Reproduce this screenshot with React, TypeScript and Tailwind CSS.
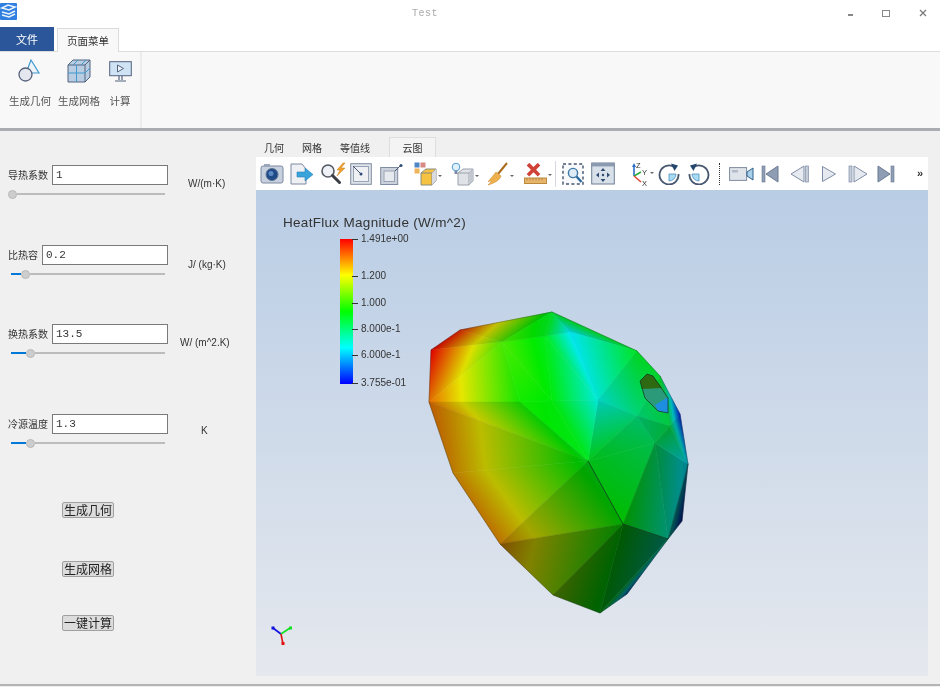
import React from "react";

type Pt = [number, number, number];
const V: Record<string, Pt> = {
  A: [552, 311, 0.46], B: [460, 329, 0.96], C: [431, 349, 1], D: [429, 401, 0.88],
  E: [453, 472, 0.84], F: [500, 543, 0.85], G: [553, 594, 0.66], H: [600, 612, 0.48],
  I: [627, 593, 0.12], J: [668, 538, 0.3], K: [682, 520, 0.03], L: [688, 463, 0.22],
  M: [680, 413, 0.03], N: [660, 375, 0.45], O: [637, 350, 0.46], P: [502, 341, 0.58],
  Q: [570, 331, 0.24], R: [520, 401, 0.52], S: [598, 399, 0.27], T: [588, 460, 0.47],
  U: [623, 523, 0.5], W: [637, 415, 0.36], X: [655, 442, 0.4], Y: [670, 425, 0.42],
  Z: [545, 335, 0.47], K2: [552, 400, 0.49],
};
const F: [string, string, string, number][] = [
  ["A", "B", "P", 0.82], ["B", "C", "P", 0.85], ["C", "D", "P", 0.95], ["D", "R", "P", 0.98],
  ["P", "R", "K2", 1], ["P", "K2", "Z", 1], ["Z", "K2", "S", 1], ["Z", "S", "Q", 1],
  ["P", "A", "Z", 0.92], ["Z", "A", "Q", 0.92], ["A", "O", "Q", 0.86],
  ["Q", "O", "S", 0.97], ["O", "W", "S", 0.9], ["S", "W", "T", 0.85], ["R", "T", "K2", 0.98], ["K2", "T", "S", 0.98],
  ["D", "T", "R", 0.86], ["D", "E", "T", 0.8], ["E", "F", "T", 0.8], ["F", "U", "T", 0.7],
  ["F", "G", "U", 0.55], ["G", "H", "U", 0.42], ["H", "J", "U", 0.38], ["H", "I", "J", 0.42],
  ["T", "U", "X", 0.8], ["W", "X", "T", 0.8], ["U", "J", "X", 0.62], ["J", "L", "X", 0.6],
  ["J", "K", "L", 0.35], ["O", "N", "W", 0.9], ["N", "Y", "W", 0.85], ["N", "M", "Y", 0.8],
  ["W", "Y", "X", 0.75], ["Y", "M", "L", 0.72], ["Y", "L", "X", 0.68],
];

const RAMP: [number, number, number, number][] = [
  [0, 0, 0, 1], [0.25, 0, 1, 1], [0.5, 0, 1, 0], [0.75, 1, 1, 0], [1, 1, 0, 0],
];

function Mesh() {
  const defs: React.ReactNode[] = [];
  const faces: React.ReactNode[] = [];
  F.forEach(([a, b, c, k], i) => {
    const [p, q, r] = [V[a], V[b], V[c]];
    const det = (q[0] - p[0]) * (r[1] - p[1]) - (r[0] - p[0]) * (q[1] - p[1]);
    const gx = ((q[2] - p[2]) * (r[1] - p[1]) - (r[2] - p[2]) * (q[1] - p[1])) / det;
    const gy = ((r[2] - p[2]) * (q[0] - p[0]) - (q[2] - p[2]) * (r[0] - p[0])) / det;
    const m = gx * gx + gy * gy || 1e-9;
    const x1 = p[0] - (p[2] * gx) / m;
    const y1 = p[1] - (p[2] * gy) / m;
    const id = `face${i}`;
    defs.push(
      <linearGradient key={id} id={id} gradientUnits="userSpaceOnUse" x1={x1} y1={y1} x2={x1 + gx / m} y2={y1 + gy / m}>
        {RAMP.map(([o, cr, cg, cb]) => (
          <stop key={o} offset={o} stopColor={`rgb(${Math.round(cr * 235 * k)},${Math.round(cg * 235 * k)},${Math.round(cb * 235 * k)})`} />
        ))}
      </linearGradient>
    );
    faces.push(
      <polygon key={id} points={`${p[0]},${p[1]} ${q[0]},${q[1]} ${r[0]},${r[1]}`} fill={`url(#${id})`} stroke={`url(#${id})`} strokeWidth={0.5} />
    );
  });
  return (
    <svg className="absolute left-0 top-0 blur-[0.7px]" width="672" height="486" viewBox="256 189 672 486">
      <defs>{defs}</defs>
      {faces}
      <polygon points="552,311 460,329 431,349 429,401 453,472 500,543 553,594 600,612 627,593 668,538 682,520 688,463 680,413 660,375 637,350" fill="none" stroke="#1a2a20" strokeOpacity="0.45" strokeWidth="0.7" />
      <polyline points="588,460 623,523 668,538" fill="none" stroke="#0d3318" strokeWidth="0.8" />
      <polygon points="640,380 647,373 653,375 668,397 668,412 658,410 645,397" fill="#2a9a78" />
      <polygon points="640,380 647,373 653,375 662,387 642,388" fill="#2e6a12" />
      <polygon points="655,404 668,396 668,412 658,410" fill="#1e8fe0" />
      <polyline points="640,380 647,373 653,375 668,397 668,412 658,410 645,397 640,380" fill="none" stroke="#12301c" strokeWidth="0.7" />
    </svg>
  );
}

const G = "#8e9db4";

function Camera() {
  return (
    <svg width="24" height="22" viewBox="0 0 24 22" className="ml-[4px]">
      <rect x="1" y="3" width="22" height="17" rx="2" fill="#c7d0de" stroke="#7d8aa0" />
      <rect x="4" y="1" width="6" height="3" fill="#9aa7ba" />
      <circle cx="12" cy="11.5" r="6" fill="#1f4a86" stroke="#5e7492" />
      <circle cx="11" cy="10.5" r="2.5" fill="#5c8ac4" />
    </svg>
  );
}
function Export() {
  return (
    <svg width="24" height="22" viewBox="0 0 24 22" className="ml-[6px]">
      <path d="M1 1h11l4 5v15H1z" fill="#eef0f4" stroke="#7d8aa0" />
      <path d="M7 9h8V5l8 6.5-8 6.5v-4H7z" fill="#39a4dc" stroke="#2a7fb5" strokeWidth="0.6" />
    </svg>
  );
}
function ZoomBolt() {
  return (
    <svg width="28" height="24" viewBox="0 0 28 24" className="ml-[6px]">
      <circle cx="8" cy="9" r="6" fill="#eef2f6" stroke="#555b64" strokeWidth="1.6" />
      <path d="M12.5 13.5l7 7" stroke="#3a3f46" strokeWidth="3" strokeLinecap="round" />
      <path d="M23 1l-6 7h3l-3 6 8-8h-4l4-5z" fill="#f0a22e" stroke="#c97a18" strokeWidth="0.5" />
    </svg>
  );
}
function BoxDot() {
  return (
    <svg width="22" height="22" viewBox="0 0 22 22" className="ml-[2px]">
      <rect x="0.7" y="0.7" width="20.6" height="20.6" fill="#dfe3ea" stroke="#7f8ba0" />
      <rect x="3.5" y="3.5" width="15" height="15" fill="#eef0f4" stroke="#98a3b5" />
      <path d="M3 3l8 8" stroke="#44546e" />
      <circle cx="11" cy="11" r="1.5" fill="#2d4a78" />
    </svg>
  );
}
function BoxOut() {
  return (
    <svg width="24" height="22" viewBox="0 0 24 22" className="ml-[8px]">
      <rect x="0.7" y="4.5" width="17" height="17" fill="#ccd2dc" stroke="#7f8ba0" />
      <rect x="4" y="8" width="10.5" height="10.5" fill="#e6e9ee" stroke="#98a3b5" />
      <path d="M15 8l6-6" stroke="#44546e" />
      <circle cx="21" cy="2.5" r="1.5" fill="#2d4a78" />
    </svg>
  );
}
function Arrow() {
  return <path d="M0 0h4l-2 2z" fill="#666" />;
}
function ColorCube() {
  return (
    <svg width="28" height="24" viewBox="0 0 28 24" className="ml-[10px]">
      <rect x="0.5" y="0.5" width="5" height="5" fill="#4f86c6" />
      <rect x="6.5" y="0.5" width="5" height="5" fill="#d78a84" />
      <rect x="0.5" y="6.5" width="5" height="5" fill="#f0b45a" />
      <path d="M7 11l5-4h10v12l-4 4H7z" fill="#f5c242" stroke="#8b8b80" />
      <path d="M7 11h11l4-4M18 11v12" fill="none" stroke="#8b8b80" />
      <path d="M18 11l4-4v12l-4 4z" fill="#d8dadf" />
      <g transform="translate(24 13)"><Arrow /></g>
    </svg>
  );
}
function BulbCube() {
  return (
    <svg width="28" height="24" viewBox="0 0 28 24" className="ml-[9px]">
      <circle cx="5" cy="5" r="3.8" fill="#e3f1fb" stroke="#4d9bd4" />
      <path d="M3.5 9h3v3h-3z" fill="#7d8aa0" />
      <path d="M7 11l5-4h10v12l-4 4H7z" fill="#dfe2e7" stroke="#9aa2ae" />
      <path d="M7 11h11l4-4M18 11v12" fill="none" stroke="#9aa2ae" />
      <path d="M18 11l4-4v12l-4 4z" fill="#c3c8d0" />
      <g transform="translate(24 13)"><Arrow /></g>
    </svg>
  );
}
function Broom() {
  return (
    <svg width="28" height="24" viewBox="0 0 28 24" className="ml-[8px]">
      <path d="M20 1L11 12" stroke="#a86c1c" strokeWidth="2" />
      <path d="M9 10l5 4c-1 4-6 7-13 9 2-2 3-3 3-4-1 0-2 0-3 1 2-3 5-6 8-10z" fill="#eeb04a" stroke="#c5862a" strokeWidth="0.5" />
      <g transform="translate(23 13)"><Arrow /></g>
    </svg>
  );
}
function RulerX() {
  return (
    <svg width="28" height="22" viewBox="0 0 28 22" className="ml-[9px]">
      <path d="M5 1l5 5 5-5 3 3-5 5 5 5-3 3-5-5-5 5-3-3 5-5-5-5z" fill="#cf4238" transform="translate(1 -1) scale(0.85)" />
      <rect x="0.5" y="15" width="22" height="5.5" fill="#e8b56a" stroke="#b98a3e" />
      <path d="M3 15v2.5M6 15v2.5M9 15v2.5M12 15v2.5M15 15v2.5M18 15v2.5" stroke="#a0783a" strokeWidth="0.7" />
      <g transform="translate(24 11)"><Arrow /></g>
    </svg>
  );
}
function ZoomBox() {
  return (
    <svg width="23" height="24" viewBox="0 0 23 24" className="ml-[6px]">
      <rect x="1" y="2" width="20" height="20" fill="#f8f9fb" stroke="#44546e" strokeWidth="1.4" strokeDasharray="3 2.4" />
      <circle cx="11" cy="11" r="4.6" fill="#dcebf6" stroke="#3d78a8" strokeWidth="1.4" />
      <path d="M14.5 14.5l5 5.5" stroke="#2a6aa0" strokeWidth="2.4" />
    </svg>
  );
}
function MoveBox() {
  return (
    <svg width="24" height="24" viewBox="0 0 24 24" className="ml-[6px]">
      <rect x="0.7" y="1" width="22.6" height="21" fill="#d8e0ea" stroke="#6f7d94" />
      <rect x="0.7" y="1" width="22.6" height="3.4" fill="#8b9ab0" />
      <path d="M12 6l2.4 3h-4.8zM12 20l2.4-3h-4.8zM5 13l3-2.4v4.8zM19 13l-3-2.4v4.8z" fill="#2f4a70" />
      <circle cx="12" cy="13" r="1.2" fill="#2f4a70" />
    </svg>
  );
}
function Axes() {
  return (
    <svg width="28" height="26" viewBox="0 0 28 26" className="ml-[12px]">
      <path d="M7 15V4" stroke="#2a6fc6" strokeWidth="1.6" />
      <path d="M5 6l2-4 2 4z" fill="#2a6fc6" />
      <path d="M7 15l7-4" stroke="#2eae3a" strokeWidth="1.6" />
      <path d="M7 15l7 6" stroke="#e2483a" strokeWidth="1.6" />
      <text x="9" y="7" fontSize="7.5" fill="#333" fontFamily="Liberation Sans, sans-serif">Z</text>
      <text x="15" y="14" fontSize="7.5" fill="#333" fontFamily="Liberation Sans, sans-serif">Y</text>
      <text x="15" y="25" fontSize="7.5" fill="#333" fontFamily="Liberation Sans, sans-serif">X</text>
      <g transform="translate(23 11)"><Arrow /></g>
    </svg>
  );
}
function Rot({ flip }: { flip?: boolean }) {
  return (
    <svg width="22" height="22" viewBox="0 0 22 22" className={flip ? "ml-[8px] -scale-x-100" : "ml-[3px]"}>
      <path d="M11 11h7a7 7 0 0 1-7 7z" fill="#a9dcf3" stroke="#4c8fc0" strokeWidth="0.8" />
      <path d="M16.5 4.2A9.5 9.5 0 1 0 20.5 11" fill="none" stroke="#46566e" strokeWidth="1.8" />
      <path d="M13 0.5l7 2-3.5 5.5z" fill="#24466f" />
    </svg>
  );
}
function VideoCam() {
  return (
    <svg width="25" height="16" viewBox="0 0 25 16" className="ml-[9px]">
      <rect x="0.6" y="1.6" width="17" height="12.8" fill="#dfe3ea" stroke="#7f8ba0" />
      <rect x="3" y="4" width="6" height="2.5" fill="#b4bcc9" />
      <path d="M18 6l6-4v12l-6-4z" fill="#a8d0ea" stroke="#30608e" />
    </svg>
  );
}
const tri = "#c3ccd8";
function First() {
  return (
    <svg width="18" height="18" viewBox="0 0 18 18" className="ml-[7px]">
      <rect x="1" y="1" width="3" height="16" fill={G} stroke="#6a7a93" strokeWidth="0.6" />
      <path d="M17 1v16L5 9z" fill={G} stroke="#6a7a93" />
    </svg>
  );
}
function Prev() {
  return (
    <svg width="20" height="18" viewBox="0 0 20 18" className="ml-[11px]">
      <path d="M14 1v16L1 9z" fill="#e6eaf0" stroke="#7f8ea6" />
      <rect x="15.5" y="1" width="3" height="16" fill={tri} stroke="#7f8ea6" strokeWidth="0.7" />
    </svg>
  );
}
function Play() {
  return (
    <svg width="16" height="18" viewBox="0 0 16 18" className="ml-[11px]">
      <path d="M1.5 1.5v15L14.5 9z" fill="#e6eaf0" stroke="#7f8ea6" />
    </svg>
  );
}
function Next() {
  return (
    <svg width="20" height="18" viewBox="0 0 20 18" className="ml-[11px]">
      <rect x="1" y="1" width="3" height="16" fill={tri} stroke="#7f8ea6" strokeWidth="0.7" />
      <path d="M6 1v16L19 9z" fill="#e6eaf0" stroke="#7f8ea6" />
    </svg>
  );
}
function Last() {
  return (
    <svg width="18" height="18" viewBox="0 0 18 18" className="ml-[9px]">
      <path d="M1 1v16L13 9z" fill={G} stroke="#6a7a93" />
      <rect x="14" y="1" width="3" height="16" fill={G} stroke="#6a7a93" strokeWidth="0.6" />
    </svg>
  );
}

function Param({ label, value, unit, unitCls, sliderCls, blueCls }: {
  label: string; value: string; unit: string; unitCls: string; sliderCls: string; blueCls: string;
}) {
  return (
    <div className="flex items-start">
      <div className="w-[160px]">
        <div className="flex items-center justify-between">
          <span className="text-[10px] text-[#333] -mt-[2px]">{label}</span>
          <Field value={value} cls={label === "比热容" ? "w-[126px]" : "w-[116px]"} />
        </div>
        <div className={`mt-[4px] flex h-[10px] items-center ${sliderCls}`}>
          <div className={`h-[2px] bg-[#0078d7] ${blueCls}`} />
          <div className="h-[9px] w-[9px] shrink-0 rounded-full border border-[#b8b8b8] bg-[#cdcdcd]" />
          <div className="h-[2px] flex-1 bg-[#bcbcbc]" />
        </div>
      </div>
      <span className={`whitespace-nowrap text-[10px] leading-[14px] text-[#333] [font-family:'Liberation_Sans',sans-serif] ${unitCls}`}>{unit}</span>
    </div>
  );
}

function Field({ value, cls }: { value: string; cls: string }) {
  return (
    <input
      readOnly
      value={value}
      className={`h-[20px] border border-[#7a7a7a] bg-white pl-[3px] text-[11px] text-[#333] outline-none [font-family:'Liberation_Mono',monospace] ${cls}`}
    />
  );
}

function Btn({ children, cls }: { children: React.ReactNode; cls: string }) {
  return (
    <button className={`ml-[54px] h-[16px] w-[52px] rounded-[2px] border border-[#a0a0a0] bg-[#dcdcdc] text-center text-[12px] leading-[14px] text-[#222] ${cls}`}>
      {children}
    </button>
  );
}

function RibbonItem({ label, icon, cls }: { label: string; icon: React.ReactNode; cls: string }) {
  return (
    <div className={`flex flex-col items-center ${cls}`}>
      <div className="flex h-[32px] items-center">{icon}</div>
      <span className="mt-[7px] whitespace-nowrap text-[10.5px] leading-[14px] text-[#555]">{label}</span>
    </div>
  );
}

const legend = [
  { t: "1.491e+00", cls: "top-[-6px]" },
  { t: "1.200", cls: "top-[31px]" },
  { t: "1.000", cls: "top-[58px]" },
  { t: "8.000e-1", cls: "top-[84px]" },
  { t: "6.000e-1", cls: "top-[110px]" },
  { t: "3.755e-01", cls: "top-[138px]" },
];

export default function App() {
  return (
    <div className="flex h-[687px] w-[940px] flex-col overflow-hidden bg-[#f0f0f0] blur-[0.5px] [font-family:'Noto_Sans_CJK_SC','Liberation_Sans',sans-serif]">
      {/* title bar */}
      <div className="flex h-[28px] items-start bg-white">
        <svg width="17" height="17" viewBox="0 0 17 17" className="mt-[3px] shrink-0">
          <rect width="17" height="17" rx="1" fill="#2f7fe0" />
          <path d="M2 5l6-3 7 2-6 3zM2 9l7 2 6-3M2 12l7 2 6-3" fill="none" stroke="#e7f1fc" strokeWidth="1.6" />
        </svg>
        <span className="ml-[395px] mt-[7px] text-[10px] leading-[14px] tracking-[0.5px] text-[#aaa] [font-family:'Liberation_Mono',monospace]">Test</span>
        <div className="ml-auto mt-[9px] flex items-center">
          <div className="mt-[4px] h-[2px] w-[5px] bg-[#888]" />
          <div className="ml-[29px] h-[7px] w-[8px] border-[1.5px] border-[#888]" />
          <svg width="8" height="8" viewBox="0 0 8 8" className="ml-[29px] mr-[13px]"><path d="M1 1l6 6M7 1l-6 6" stroke="#777" strokeWidth="1.2" /></svg>
        </div>
      </div>
      {/* tabs */}
      <div className="flex h-[24px] items-end border-b border-[#dcdcdc] bg-white">
        <div className="flex h-[24px] w-[54px] items-center justify-center bg-[#2b579a] text-[11px] text-white">文件</div>
        <div className="relative top-[1px] ml-[3px] flex h-[24px] w-[62px] items-center justify-center border border-b-0 border-[#dcdcdc] bg-[#f8f8f8] text-[10.5px] text-[#333]">页面菜单</div>
      </div>
      {/* ribbon */}
      <div className="flex h-[79px] items-stretch border-b-[3px] border-[#a9adb2] bg-[#f8f8f8]">
        <div className="flex w-[142px] items-start border-r-2 border-[#ececec] pt-[3px]">
          <RibbonItem cls="ml-[9px] w-[42px]" label="生成几何" icon={
            <svg width="24" height="24" viewBox="0 0 24 24">
              <path d="M13 1l8 13H8z" fill="#eef3f8" stroke="#3f9ad0" strokeWidth="1.2" />
              <circle cx="7.5" cy="15.5" r="6.5" fill="#e4e7ee" stroke="#56627a" strokeWidth="1.3" />
            </svg>
          } />
          <RibbonItem cls="ml-[7px] w-[42px]" label="生成网格" icon={
            <svg width="24" height="24" viewBox="0 0 24 24">
              <path d="M1 6l5-5h17v17l-5 5H1z" fill="#b9cde2" stroke="#52637e" />
              <path d="M1 6h17v17M18 6l5-5" fill="none" stroke="#52637e" />
              <path d="M9.5 6v17M1 14h17M6 6l5-5M14 6l5-5M18 14l5-5" fill="none" stroke="#3f9ad0" />
            </svg>
          } />
          <RibbonItem cls="ml-[6px] w-[28px]" label="计算" icon={
            <svg width="23" height="21" viewBox="0 0 23 21">
              <rect x="0.7" y="0.7" width="21.6" height="14" fill="#cfe3f5" stroke="#52637e" />
              <path d="M8.5 4v7l6-3.5z" fill="#eef4fa" stroke="#52637e" />
              <path d="M10 15v4M13 15v4M6 20h11" stroke="#52637e" strokeWidth="1.2" />
            </svg>
          } />
        </div>
      </div>
      {/* main */}
      <div className="flex flex-1">
        <div className="w-[256px] shrink-0 pl-[8px] pt-[34px]">
          <Param label="导热系数" value="1" unit="W/(m·K)" unitCls="ml-[20px] mt-[12px]" sliderCls="w-[157px]" blueCls="w-0" />
          <div className="mt-[46px]">
            <Param label="比热容" value="0.2" unit="J/ (kg·K)" unitCls="ml-[20px] mt-[13px]" sliderCls="ml-[3px] w-[154px]" blueCls="w-[10px]" />
          </div>
          <div className="mt-[45px]">
            <Param label="换热系数" value="13.5" unit="W/ (m^2.K)" unitCls="ml-[12px] mt-[12px]" sliderCls="ml-[3px] w-[154px]" blueCls="w-[15px]" />
          </div>
          <div className="mt-[56px]">
            <Param label="冷源温度" value="1.3" unit="K" unitCls="ml-[33px] mt-[10px]" sliderCls="ml-[3px] w-[154px]" blueCls="w-[15px]" />
          </div>
          <div className="flex flex-col items-start">
            <Btn cls="mt-[54px]">生成几何</Btn>
            <Btn cls="mt-[43px]">生成网格</Btn>
            <Btn cls="mt-[38px]">一键计算</Btn>
          </div>
        </div>
        <div className="flex w-[672px] flex-col">
          <div className="mt-[6px] flex h-[20px] items-center text-[10px] text-[#333]">
            <span className="ml-[8px]">几何</span>
            <span className="ml-[18px]">网格</span>
            <span className="ml-[18px]">等值线</span>
            <span className="ml-[19px] flex h-[20px] w-[47px] items-center justify-center border border-b-0 border-[#dedede] bg-[#f4f4f4]">云图</span>
          </div>
          <div className="flex h-[33px] items-center bg-white">
            <Camera /><Export /><ZoomBolt /><BoxDot /><BoxOut /><ColorCube /><BulbCube /><Broom /><RulerX />
            <div className="ml-[3px] h-[26px] w-px bg-[#d5d8de]" />
            <ZoomBox /><MoveBox /><Axes /><Rot /><Rot flip />
            <div className="ml-[9px] h-[22px] border-l border-dotted border-[#333]" />
            <VideoCam /><First /><Prev /><Play /><Next /><Last />
            <span className="ml-[22px] text-[11px] font-bold leading-none text-[#333] [font-family:'Liberation_Sans',sans-serif]">»</span>
          </div>
          <div className="relative h-[486px] overflow-hidden bg-[linear-gradient(to_bottom,#b9cde5,#e5e8ee)] [font-family:'Liberation_Sans',sans-serif]">
            <Mesh />
            <span className="absolute left-[27px] top-[25px] whitespace-nowrap text-[13.5px] leading-[16px] tracking-[0.3px] text-[#333]">HeatFlux Magnitude (W/m^2)</span>
            <div className="absolute left-[84px] top-[49px] h-[145px] w-[13px] bg-[linear-gradient(to_top,#0000ff,#00ffff,#00ff00,#ffff00,#ff0000)]">
              {legend.map((l) => (
                <div key={l.t} className={`absolute left-[12px] flex items-center ${l.cls}`}>
                  <div className="h-px w-[6px] bg-[#333]" />
                  <span className="ml-[3px] whitespace-nowrap text-[10px] leading-[12px] text-[#333]">{l.t}</span>
                </div>
              ))}
            </div>
            <svg className="absolute left-[14px] top-[434px]" width="24" height="24" viewBox="0 0 24 24">
              <path d="M11 10L3 4" stroke="#1010e0" strokeWidth="1.6" />
              <path d="M11 10l9-6" stroke="#10e020" strokeWidth="1.6" />
              <path d="M11 10l2 10" stroke="#e01010" strokeWidth="1.6" />
              <rect x="1.5" y="2.5" width="3" height="3" fill="#1010e0" />
              <rect x="19" y="2.5" width="3" height="3" fill="#10e020" />
              <rect x="11.5" y="18" width="3" height="3" fill="#e01010" />
            </svg>
          </div>
        </div>
      </div>
      <div className="mb-[1px] h-[2px] bg-[#b4b4b4]" />
    </div>
  );
}
